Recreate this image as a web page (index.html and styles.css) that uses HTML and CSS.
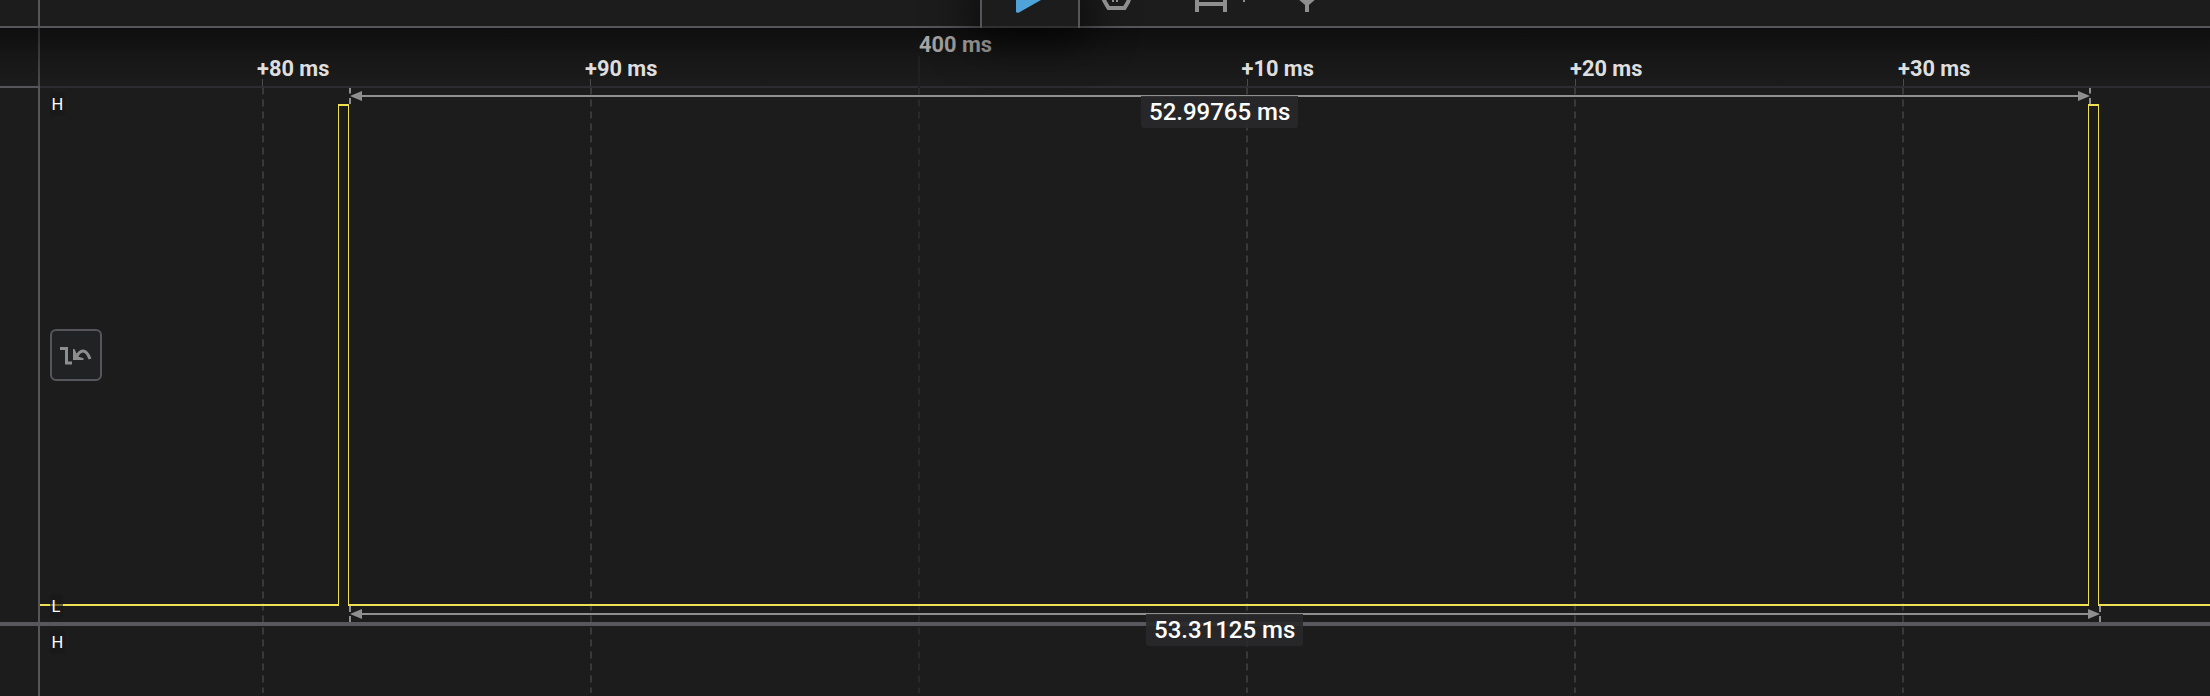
FILE: index.html
```html
<!DOCTYPE html>
<html lang="en">
<head>
<meta charset="utf-8">
<title>Logic analyzer</title>
<link rel="stylesheet" href="styles.css">
</head>
<body>
<div class="app">
  <header class="toolbar">
    <div class="toolbar-gutter"></div>
    <div class="tools">
      <div class="tool tool-active">
        <svg width="96" height="26" viewBox="0 0 96 26"><path class="play" d="M34 -14V11.500Q34.500 13.500 37 12.500L59 0V-14Z"/></svg>
      </div>
      <svg class="tool-icons" width="250" height="26" viewBox="0 0 250 26">
        <path class="stroke" d="M20 -8L25 2L28.500 8H44.500L48 2L52 -8"/>
        <path class="thin" d="M33 -4V2M37 -4V2"/>
        <path class="stroke" d="M117 -4V12M145 -4V12M117 4H145"/>
        <path class="thin" d="M164 -4V2"/>
        <path class="stroke" d="M227 12V0M227 4L220 -2M227 4L234 -2"/>
      </svg>
    </div>
  </header>
  <div class="ruler"><div class="ruler-gutter"></div><div class="ruler-scale"></div></div>
  <section class="channel">
    <div class="channel-gutter"></div>
    <div class="channel-body">
      <button class="invert" aria-label="Edge">
        <svg width="48" height="48" viewBox="0 0 48 48">
          <path class="stroke-icon" d="M8 17.500H14.500V32H20"/>
          <path class="stroke-icon" d="M24 27Q27 20 31 20Q35 20 38 28"/>
          <path class="fill-icon" d="M21 18V29H31.500V27.300L26 25.500L22.500 18Z"/>
        </svg>
      </button>
    </div>
  </section>
  <section class="channel channel-next">
    <div class="channel-gutter"></div>
    <div class="channel-body"></div>
  </section>

  <svg class="plot" width="2210" height="696" viewBox="0 0 2210 696">
    <defs>
      <linearGradient id="origin-fade"><stop offset="0" stop-color="#a8a8a8"/><stop offset="1" stop-color="#808080"/></linearGradient>
    </defs>
    <g class="grid">
      <path d="M263 87.500V693M591 87.500V693M1247 87.500V693M1575 87.500V693M1903 87.500V693"/>
      <path class="major" d="M919 87.500V693"/>
    </g>
    <path class="ticks" d="M262.500 79V86M590.500 79V86M1247.500 79V86M1575.500 79V86M1903.500 79V86"/>
    <path class="tick-major" d="M919 56V88"/>
    <path class="separator" d="M0 624H2210"/>
    <path class="separator-v" d="M39 620V628"/>

    <g class="wave">
      <path class="level" d="M40 605H339M348 605H2089M2098 605H2210M338 105H349M2088 105H2099"/>
      <path class="edge" d="M338.500 104V606M348.500 104V606M2088.500 104V606M2098.500 104V606"/>
    </g>

    <g class="measure">
      <path d="M350 88V93.500M350 98V104M2090 88V93.500M2090 98V104M352 96H2088"/>
      <path class="head" d="M350 96L362 91V101ZM2090 96L2078 91V101Z"/>
      <path d="M350 606V612M350 616V622M2100 606V612M2100 616V622M352 614H2098"/>
      <path class="head" d="M350 614L362 609V619ZM2100 614L2088 609V619Z"/>
    </g>

    <path class="badge" d="M1141 96H1298V125Q1298 128 1295 128H1144Q1141 128 1141 125Z"/>
    <text class="value" x="1149" y="120">52.99765 ms</text>
    <path class="badge" d="M1146 614H1303V643Q1303 646 1300 646H1149Q1146 646 1146 643Z"/>
    <text class="value" x="1154" y="638">53.31125 ms</text>

    <g class="level-tags">
      <rect x="50" y="92" width="15" height="24" rx="4"/>
      <rect x="50" y="594" width="13" height="24" rx="4"/>
      <rect x="50" y="630" width="15" height="24" rx="4"/>
      <text x="51.500" y="110">H</text>
      <text x="51.500" y="612">L</text>
      <text x="51.500" y="648">H</text>
    </g>

    <g class="scale">
      <text x="257" y="75.500">+80 ms</text>
      <text x="585" y="75.500">+90 ms</text>
      <text class="origin" x="919" y="52">400 ms</text>
      <text x="1241.500" y="75.500">+10 ms</text>
      <text x="1570" y="75.500">+20 ms</text>
      <text x="1898" y="75.500">+30 ms</text>
    </g>
  </svg>
</div>
</body>
</html>
```
FILE: styles.css
```css
* { box-sizing: border-box; }
body { margin: 0; background: #1c1c1c; }
.app {
  position: relative;
  display: flex;
  flex-direction: column;
  width: 2210px;
  height: 696px;
  overflow: hidden;
  background: #1c1c1c;
  font-family: Roboto, "Liberation Sans", sans-serif;
}
.toolbar {
  display: flex;
  flex: none;
  height: 28px;
  border-bottom: 2px solid #56555a;
}
.toolbar-gutter, .channel-gutter { flex: 0 0 40px; border-right: 2px solid #56555a; }
.tools { display: flex; align-items: flex-start; height: 26px; padding-left: 940px; }
.tool-active {
  width: 100px;
  height: 28px;
  border: solid #56555a;
  border-width: 0 2px;
  background: linear-gradient(#1c1c1c 26px, #303030 26px);
  box-shadow: 0 0 48px 6px #000;
  z-index: 1;
}
.tool-active svg, .tool-icons { display: block; }
.tool-icons { position: relative; z-index: 2; }
.play { fill: #4fa3d9; }
.stroke { fill: none; stroke: #8e8e8e; stroke-width: 4; }
.thin { fill: none; stroke: #8e8e8e; stroke-width: 2; }
.ruler {
  display: flex;
  flex: none;
  height: 60px;
  background: linear-gradient(rgba(0, 0, 0, .5), rgba(0, 0, 0, .18) 50%, rgba(0, 0, 0, 0));
}
.ruler-gutter {
  flex: 0 0 40px;
  border-bottom: 2px solid #56555a;
  background: linear-gradient(#2c2c2f, #4c4b50) right / 2px 100% no-repeat;
}
.ruler-scale { flex: 1; border-bottom: 2px solid #2d2c32; }
.channel { display: flex; flex: none; height: 536px; }
.channel-next { flex: 1; }
.channel-body { display: flex; align-items: flex-start; flex: 1; padding: 241px 10px 0; }
.channel-next .channel-body { padding: 0; }
.invert {
  width: 52px;
  height: 52px;
  padding: 0;
  border: 2px solid #56555a;
  border-radius: 6px;
  background: #212224;
}
.invert svg { display: block; }
.stroke-icon { fill: none; stroke: #8e8e8e; stroke-width: 3; }
.fill-icon { fill: #8e8e8e; }
.plot { position: absolute; inset: 0; z-index: 2; pointer-events: none; }
.grid path { stroke: #39383c; stroke-width: 2; stroke-dasharray: 7 5; }
.grid .major { stroke: #29292b; }
.ticks { stroke: #4b4a4e; stroke-width: 1; }
.tick-major { stroke: #202022; stroke-width: 2; }
.separator { stroke: #58575d; stroke-width: 4; }
.separator-v { stroke: #56555a; stroke-width: 2; }
.wave { fill: none; stroke: #ecdf52; }
.level { stroke-width: 2; }
.edge { stroke-width: 1; }
.measure { fill: none; stroke: #8f8f8f; stroke-width: 2; }
.measure .head { fill: #8f8f8f; stroke: none; }
.badge { fill: #29292b; fill-opacity: .9; }
.value { fill: #fff; font-size: 24px; font-weight: 500; }
.level-tags rect { fill: #181818; fill-opacity: .6; }
.level-tags text { fill: #fff; font-size: 16.5px; font-weight: 400; }
.scale text { fill: #dedede; font-size: 21.8px; font-weight: 700; }
.scale .origin { fill: url(#origin-fade); }
```
